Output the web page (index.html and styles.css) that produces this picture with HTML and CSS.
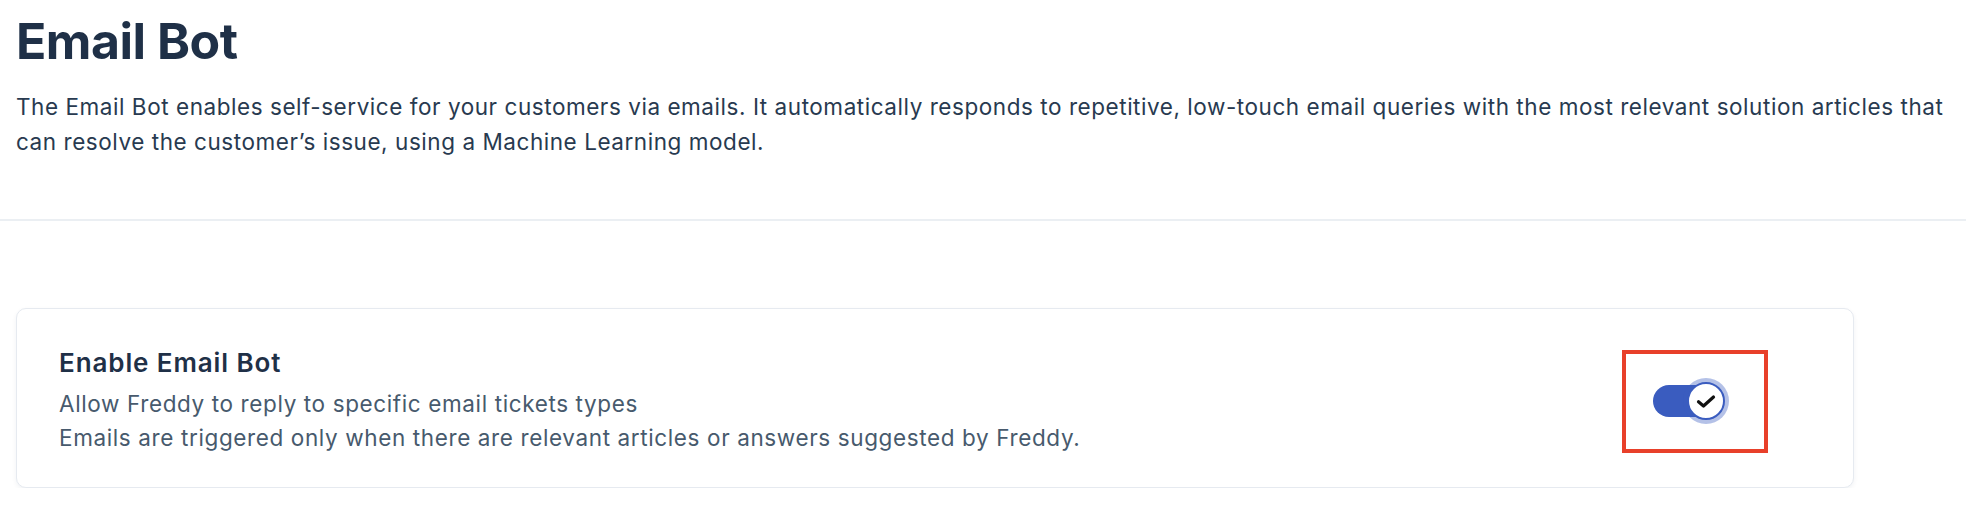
FILE: index.html
```html
<!DOCTYPE html>
<html lang="en">
<head>
<meta charset="utf-8">
<title>Email Bot</title>
<link rel="stylesheet" href="styles.css">
</head>
<body>
  <header class="header">
    <h1 class="title">Email Bot</h1>
    <p class="desc">The Email Bot enables self-service for your customers via emails. It automatically responds to repetitive, low-touch email queries with the most relevant solution articles that can resolve the customer’s issue, using a Machine Learning model.</p>
  </header>
  <hr class="divider">
  <main class="content">
    <section class="card">
      <div class="card-text">
        <h2 class="card-title">Enable Email Bot</h2>
        <p class="card-line">Allow Freddy to reply to specific email tickets types</p>
        <p class="card-line">Emails are triggered only when there are relevant articles or answers suggested by Freddy.</p>
      </div>
      <div class="highlight">
        <div class="switch">
          <span class="knob">
            <svg class="check" width="20" height="15" viewBox="0 0 20 15"><path d="M2.5 7.8 L7.5 12 L17.5 3" fill="none" stroke="#111" stroke-width="3.2" stroke-linecap="round" stroke-linejoin="round"/></svg>
          </span>
        </div>
      </div>
    </section>
  </main>
</body>
</html>
```

FILE: styles.css
```css
* { box-sizing: border-box; }

body {
  margin: 0;
  background: #ffffff;
  font-family: Inter, "Noto Sans", "Liberation Sans", sans-serif;
  color: #1f3047;
}

.header {
  padding: 0 16px;
}

.title {
  margin: 11px 0 0;
  font-size: 50px;
  line-height: 60px;
  font-weight: 700;
  color: #1f3047;
  letter-spacing: -0.5px;
}

.desc {
  margin: 18px 0 0;
  font-size: 22.5px;
  line-height: 35px;
  letter-spacing: 0.55px;
  color: #283a50;
}

.divider {
  margin: 60px 0 0;
  border: 0;
  border-top: 2px solid #ebeff3;
  height: 0;
}

.content {
  padding: 87px 112px 0 16px;
}

.card {
  display: flex;
  align-items: center;
  justify-content: space-between;
  border: 1px solid #e6eaf0;
  border-radius: 10px;
  box-shadow: 0 2px 5px rgba(18, 52, 77, 0.06);
  padding: 38px 85px 32px 42px;
  background: #fff;
}

.card-title {
  margin: 0 0 8px;
  font-size: 26px;
  line-height: 32px;
  font-weight: 600;
  letter-spacing: 0.9px;
  color: #1f3047;
}

.card-line {
  margin: 0;
  font-size: 22.5px;
  line-height: 34px;
  letter-spacing: 0.62px;
  color: #475a6d;
}

.highlight {
  width: 146px;
  height: 103px;
  border: 4px solid #e8402a;
  display: flex;
  align-items: center;
  padding-left: 27px;
}

.switch {
  position: relative;
  width: 68px;
  height: 32px;
  border-radius: 16px;
  background: #3a5cbf;
}

.knob {
  position: absolute;
  left: 34px;
  top: -3px;
  width: 38px;
  height: 38px;
  border-radius: 50%;
  background: #fff;
  border: 2px solid #3a5cbf;
  box-shadow: 0 0 0 4px rgba(58, 92, 191, 0.38);
  display: flex;
  align-items: center;
  justify-content: center;
}

.check {
  display: block;
}
```
